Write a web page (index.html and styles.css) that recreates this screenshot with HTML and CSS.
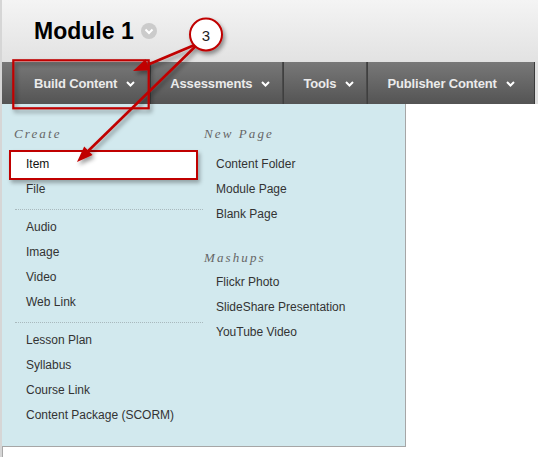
FILE: index.html
```html
<!DOCTYPE html>
<html>
<head>
<meta charset="utf-8">
<link rel="stylesheet" href="styles.css">
</head>
<body>
<div class="page">
  <div class="topbar">
    <header class="header">
      <h1 class="title">Module 1</h1>
      <span class="title-menu">
        <svg width="16" height="16" viewBox="0 0 16 16"><circle cx="8" cy="8" r="8" fill="#cbcbcb"/><polyline points="4.5,6.5 8,10 11.5,6.5" fill="none" stroke="#fff" stroke-width="2"/></svg>
      </span>
    </header>
    <nav class="nav">
      <div class="nav-item first">Build Content <svg class="chev" width="9" height="6" viewBox="0 0 9 6"><polyline points="1,1 4.5,4.5 8,1" fill="none" stroke="#fff" stroke-width="2"/></svg></div>
      <div class="nav-item">Assessments <svg class="chev" width="9" height="6" viewBox="0 0 9 6"><polyline points="1,1 4.5,4.5 8,1" fill="none" stroke="#fff" stroke-width="2"/></svg></div>
      <div class="nav-item">Tools <svg class="chev" width="9" height="6" viewBox="0 0 9 6"><polyline points="1,1 4.5,4.5 8,1" fill="none" stroke="#fff" stroke-width="2"/></svg></div>
      <div class="nav-item last">Publisher Content <svg class="chev" width="9" height="6" viewBox="0 0 9 6"><polyline points="1,1 4.5,4.5 8,1" fill="none" stroke="#fff" stroke-width="2"/></svg></div>
    </nav>
  </div>
  <div class="body-row">
    <div class="dropdown">
      <div class="col col-left">
        <div class="heading">Create</div>
        <ul class="list">
          <li class="active">Item</li>
          <li>File</li>
        </ul>
        <div class="sep"></div>
        <ul class="list">
          <li>Audio</li>
          <li>Image</li>
          <li>Video</li>
          <li>Web Link</li>
        </ul>
        <div class="sep"></div>
        <ul class="list">
          <li>Lesson Plan</li>
          <li>Syllabus</li>
          <li>Course Link</li>
          <li>Content Package (SCORM)</li>
        </ul>
      </div>
      <div class="col col-right">
        <div class="heading">New Page</div>
        <ul class="list">
          <li>Content Folder</li>
          <li>Module Page</li>
          <li>Blank Page</li>
        </ul>
        <div class="heading heading-second">Mashups</div>
        <ul class="list">
          <li>Flickr Photo</li>
          <li>SlideShare Presentation</li>
          <li>YouTube Video</li>
        </ul>
      </div>
    </div>
  </div>
  <div class="below"></div>

  <svg class="annot" width="538" height="457" viewBox="0 0 538 457">
    <defs>
      <filter id="sh" x="-20%" y="-20%" width="150%" height="150%">
        <feDropShadow dx="2" dy="3" stdDeviation="2.2" flood-color="#000" flood-opacity="0.4"/>
      </filter>
    </defs>
    <g filter="url(#sh)">
      <rect x="13.3" y="60.3" width="135.4" height="48" fill="none" stroke="#c00000" stroke-width="2.2"/>
      <line x1="204" y1="41" x2="147.7" y2="64.8" stroke="#c00000" stroke-width="2.6"/>
      <polygon points="133,71 145.4,59.3 150,70.3" fill="#c00000"/>
      <line x1="204" y1="38" x2="88.4" y2="150.8" stroke="#c00000" stroke-width="2.6"/>
      <polygon points="77,162 84.2,146.5 92.6,155.1" fill="#c00000"/>
      <circle cx="206" cy="34.5" r="16" fill="#fff" stroke="#c00000" stroke-width="2"/>
    </g>
    <text x="206" y="40.6" class="annot-num" text-anchor="middle">3</text>
  </svg>
</div>
</body>
</html>
```

FILE: styles.css
```css
*, *::before, *::after { box-sizing: border-box; }
html, body { margin: 0; padding: 0; background: #fff; }
body { width: 538px; height: 457px; overflow: hidden; font-family: "Liberation Sans", Arial, sans-serif; }

.page {
  position: relative;
  width: 538px;
  height: 457px;
  border-left: 2px solid #d6d6d6;
  display: flex;
  flex-direction: column;
}

.topbar { background: #dedede; }

.header {
  height: 62px;
  padding: 18px 0 0 32px;
  display: flex;
  align-items: flex-start;
  gap: 7px;
  background: linear-gradient(#f4f4f4, #e2e2e2);
}
.title {
  margin: 0;
  font-size: 23px;
  line-height: 26px;
  font-weight: bold;
  color: #000;
}
.title-menu { display: flex; margin-top: 5px; }

.nav {
  height: 42px;
  width: 533px;
  display: flex;
  background: linear-gradient(#787878, #545454);
  border-right: 1px solid #3a3a3a;
}
.nav-item {
  display: flex;
  align-items: center;
  flex-shrink: 0;
  white-space: nowrap;
  gap: 9px;
  padding: 0 13px 0 19px;
  color: #ebebeb;
  font-size: 13px;
  font-weight: bold;
  letter-spacing: -0.15px;
  border-right: 1px solid #3f3f3f;
  box-shadow: inset -1px 0 0 #4a4a4a;
}
.nav-item.first { padding-left: 32px; padding-right: 15px; }
.nav-item.last { border-right: none; box-shadow: none; }
.chev { display: block; margin-top: 1px; flex-shrink: 0; }

.body-row { display: flex; }

.dropdown {
  width: 404px;
  display: flex;
  background: #d2e9ee;
  border-right: 1px solid #a6a6a6;
  border-bottom: 1px solid #a6a6a6;
  padding: 20px 0 18px 0;
}
.col-left { width: 201px; padding-left: 12px; }
.col-right { width: 202px; padding-left: 1px; }

.heading {
  font-family: "Liberation Serif", "Times New Roman", serif;
  font-style: italic;
  font-size: 13px;
  line-height: 20px;
  letter-spacing: 2.1px;
  color: #666;
  margin-bottom: 8px;
}
.heading-second { margin-top: 21px; margin-bottom: 2px; }

.list { list-style: none; margin: 0; padding: 0; }
.list li {
  padding-left: 12px;
  font-size: 12px;
  line-height: 25px;
  height: 25px;
  color: #333;
  white-space: nowrap;
}
.list li.active { position: relative; z-index: 0; color: #111; }
.list li.active::before {
  content: "";
  position: absolute;
  z-index: -1;
  left: -5px;
  top: -2px;
  width: 189px;
  height: 30px;
  background: #fff;
  border: 2px solid #c00000;
  box-shadow: 2px 3px 4px rgba(0,0,0,0.3);
}

.sep {
  height: 13px;
  margin-left: 1px;
  padding-top: 7px;
}
.sep::before {
  content: "";
  display: block;
  border-top: 1px dotted #a9b9bd;
}

.below {
  flex: 1;
  width: 1px;
  background: #a8a8a8;
}

.annot {
  position: absolute;
  left: -2px;
  top: 0;
  pointer-events: none;
  z-index: 5;
}
.annot-num {
  font-family: "Liberation Sans", Arial, sans-serif;
  font-size: 15px;
  fill: #222;
}
```
